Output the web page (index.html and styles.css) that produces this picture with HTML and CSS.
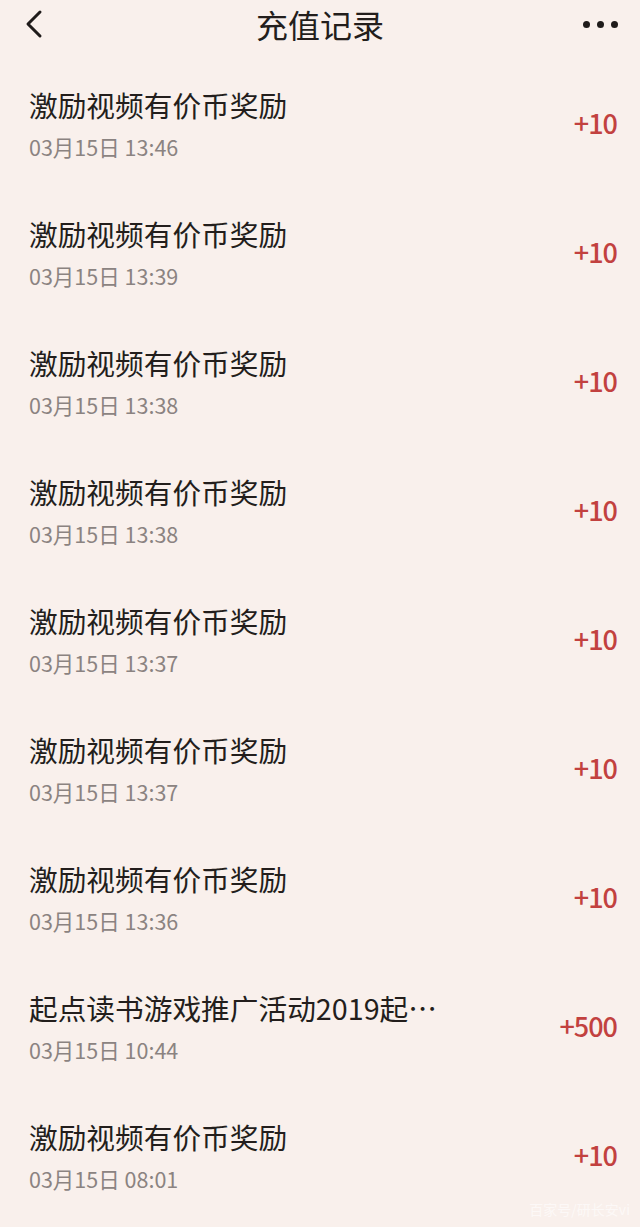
FILE: index.html
```html
<!DOCTYPE html>
<html lang="zh-CN">
<head>
    <meta charset="UTF-8">
    <meta name="viewport" content="width=device-width, initial-scale=1.0">
    <title>充值记录</title>
    <link rel="stylesheet" href="styles.css">
</head>
<body>
    <header class="top-bar">
        <span class="back">
            <svg width="24" height="32" viewBox="0 0 24 32">
                <path d="M18 4 L6 16 L18 28" fill="none" stroke="#1f1b1a" stroke-width="3" stroke-linecap="round" stroke-linejoin="round"/>
            </svg>
        </span>
        <h1>充值记录</h1>
        <span class="more">
            <i></i><i></i><i></i>
        </span>
    </header>

    <ul class="record-list">
        <li class="record">
            <div class="info">
                <div class="name">激励视频有价币奖励</div>
                <div class="time">03月15日 13:46</div>
            </div>
            <div class="amount">+10</div>
        </li>
        <li class="record">
            <div class="info">
                <div class="name">激励视频有价币奖励</div>
                <div class="time">03月15日 13:39</div>
            </div>
            <div class="amount">+10</div>
        </li>
        <li class="record">
            <div class="info">
                <div class="name">激励视频有价币奖励</div>
                <div class="time">03月15日 13:38</div>
            </div>
            <div class="amount">+10</div>
        </li>
        <li class="record">
            <div class="info">
                <div class="name">激励视频有价币奖励</div>
                <div class="time">03月15日 13:38</div>
            </div>
            <div class="amount">+10</div>
        </li>
        <li class="record">
            <div class="info">
                <div class="name">激励视频有价币奖励</div>
                <div class="time">03月15日 13:37</div>
            </div>
            <div class="amount">+10</div>
        </li>
        <li class="record">
            <div class="info">
                <div class="name">激励视频有价币奖励</div>
                <div class="time">03月15日 13:37</div>
            </div>
            <div class="amount">+10</div>
        </li>
        <li class="record">
            <div class="info">
                <div class="name">激励视频有价币奖励</div>
                <div class="time">03月15日 13:36</div>
            </div>
            <div class="amount">+10</div>
        </li>
        <li class="record">
            <div class="info">
                <div class="name">起点读书游戏推广活动2019起…</div>
                <div class="time">03月15日 10:44</div>
            </div>
            <div class="amount">+500</div>
        </li>
        <li class="record">
            <div class="info">
                <div class="name">激励视频有价币奖励</div>
                <div class="time">03月15日 08:01</div>
            </div>
            <div class="amount">+10</div>
        </li>
    </ul>

    <div class="watermark">百家号/研长安vi</div>
</body>
</html>
```

FILE: styles.css
```css
body {
    margin: 0;
    padding: 0;
    background-color: #f9f0ec;
    font-family: "Noto Sans CJK SC", "Noto Sans", sans-serif;
    color: #231e1c;
    position: relative;
    min-height: 1227px;
}

.top-bar {
    height: 48px;
    display: flex;
    align-items: center;
    justify-content: space-between;
    padding: 0 22px 0 22px;
}

.top-bar h1 {
    margin: 0;
    font-size: 32px;
    font-weight: 400;
    line-height: 48px;
}

.back {
    display: flex;
    width: 60px;
}

.more {
    display: flex;
    gap: 7px;
    width: 60px;
    justify-content: flex-end;
}

.more i {
    width: 7px;
    height: 7px;
    border-radius: 50%;
    background-color: #1f1b1a;
}

.record-list {
    list-style: none;
    margin: 0;
    padding: 12px 0 0 0;
}

.record {
    display: flex;
    align-items: center;
    justify-content: space-between;
    padding: 27px 23px 28px 29px;
}

.name {
    font-size: 28.7px;
    line-height: 36px;
    color: #231e1c;
}

.time {
    margin-top: 10px;
    font-size: 21.5px;
    line-height: 28px;
    color: #8b8381;
}

.amount {
    font-size: 27px;
    font-weight: 500;
    letter-spacing: -1px;
    color: #c2413f;
    margin-top: -4px;
}

.watermark {
    position: absolute;
    right: 10px;
    bottom: 8px;
    font-size: 14px;
    color: rgba(255, 255, 255, 0.6);
}
```
